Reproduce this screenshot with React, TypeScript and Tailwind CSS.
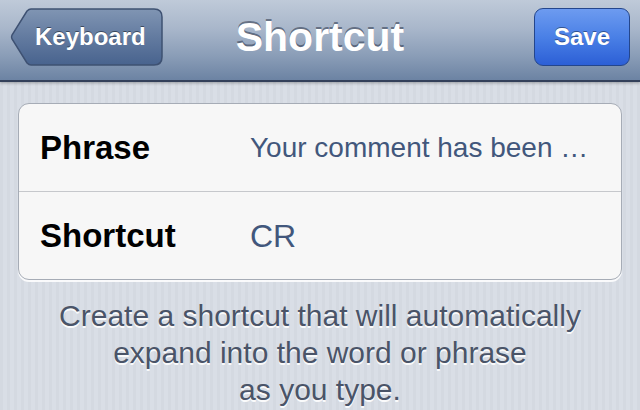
import React from "react";

export default function App() {
  const font = { fontFamily: '"Liberation Sans", Arial, Helvetica, sans-serif' };
  return (
    <div
      className="w-[640px] h-[410px] overflow-hidden flex flex-col bg-[#d6dbe3] bg-[repeating-linear-gradient(90deg,#d4d9e1_0px,#d4d9e1_3px,#d9dee6_3px,#d9dee6_7px)]"
      style={font}
    >
      {/* Nav bar */}
      <div className="h-[82px] shrink-0 grid grid-cols-[1fr_auto_1fr] items-center px-[10px] pb-[6px] bg-[linear-gradient(180deg,#bfcad9_0%,#a9b7cb_35%,#8a9db7_70%,#6c83a3_100%)] border-b-2 border-[#33405a] shadow-[0_1px_3px_rgba(0,0,0,0.3)]">
        <div className="justify-self-start">
          <div className="relative w-[153px] h-[58px] flex items-center pl-[25px]">
            <svg
              className="absolute inset-0"
              width="153"
              height="58"
              viewBox="0 0 153 58"
            >
              <defs>
                <linearGradient id="bb" x1="0" y1="0" x2="0" y2="1">
                  <stop offset="0" stopColor="#8095b3" />
                  <stop offset="0.5" stopColor="#637ba0" />
                  <stop offset="1" stopColor="#48638e" />
                </linearGradient>
              </defs>
              <path
                d="M21 1 L144 1 Q152 1 152 9 L152 49 Q152 57 144 57 L21 57 Q19 57 17 55 L2 31 Q1 29 2 27 L17 3 Q19 1 21 1 Z"
                fill="url(#bb)"
                stroke="#3e5172"
                strokeWidth="1.5"
              />
            </svg>
            <span className="relative text-white font-bold text-[24px] leading-none [text-shadow:0_-1px_0_rgba(0,0,0,0.45)]">
              Keyboard
            </span>
          </div>
        </div>
        <div className="text-white font-bold text-[41px] leading-none [text-shadow:0_-2px_0_rgba(40,50,70,0.55)]">
          Shortcut
        </div>
        <div className="justify-self-end">
          <div className="w-[96px] h-[58px] rounded-[9px] border-[1.5px] border-[#24468c] bg-[linear-gradient(180deg,#6d9bf0_0%,#4a80e6_50%,#2c5fd6_100%)] flex items-center justify-center">
            <span className="text-white font-bold text-[24px] leading-none [text-shadow:0_-1px_0_rgba(0,0,0,0.4)]">
              Save
            </span>
          </div>
        </div>
      </div>

      {/* Card */}
      <div className="mx-[18px] mt-[21px] rounded-[11px] border border-[#a6acb6] bg-[#f7f7f7] shadow-[0_2px_0_rgba(255,255,255,0.85)] flex flex-col overflow-hidden">
        <div className="h-[87px] flex items-center pl-[21px]">
          <div className="w-[210px] font-bold text-[33px] text-black leading-none">Phrase</div>
          <div className="text-[28px] text-[#42577c] leading-none whitespace-nowrap">
            Your comment has been …
          </div>
        </div>
        <div className="h-[1px] bg-[#c6c8cc]" />
        <div className="h-[87px] flex items-center pl-[21px]">
          <div className="w-[210px] font-bold text-[33px] text-black leading-none">Shortcut</div>
          <div className="text-[32px] text-[#42577c] leading-none">CR</div>
        </div>
      </div>

      {/* Footer */}
      <div className="mt-[17px] px-[20px] text-center text-[30px] leading-[37px] text-[#4a5468] [text-shadow:0_2px_0_rgba(255,255,255,0.9)]">
        Create a shortcut that will automatically
        <br />
        expand into the word or phrase
        <br />
        as you type.
      </div>
    </div>
  );
}
